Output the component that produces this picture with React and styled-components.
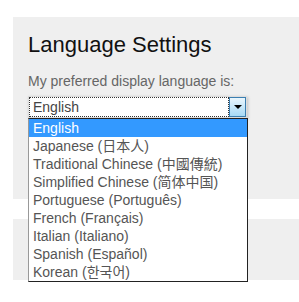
import React, { useState } from 'react'
import styled, { createGlobalStyle } from 'styled-components'

const GlobalStyle = createGlobalStyle`
  html, body {
    margin: 0;
    padding: 0;
    background: #fff;
    font-family: "Liberation Sans", Arial, "Noto Sans CJK SC", sans-serif;
  }
`

const languages = [
  'English',
  'Japanese (日本人)',
  'Traditional Chinese (中國傳統)',
  'Simplified Chinese (简体中国)',
  'Portuguese (Português)',
  'French (Français)',
  'Italian (Italiano)',
  'Spanish (Español)',
  'Korean (한국어)',
]

const Page = styled.div`
  padding: 17px 0 0 13px;
  overflow: hidden;
`

const Panel = styled.section`
  background: #efefef;
  height: ${(p) => p.$height}px;
  padding: ${(p) => (p.$padded ? '15px 15px 0' : '0')};
  margin-bottom: 20px;
  box-sizing: border-box;
`

const Heading = styled.h2`
  margin: 0;
  font-size: 22px;
  font-weight: normal;
  line-height: 25px;
  color: #111;
`

const Label = styled.p`
  margin: 16px 0 7px;
  font-size: 14px;
  line-height: 16px;
  color: #666;
`

const SelectWrap = styled.div`
  position: relative;
  width: 219px;
  z-index: 2;
`

const SelectBox = styled.div`
  display: flex;
  height: 22px;
  box-sizing: border-box;
  background: #fff;
  border: 1px solid #dcdcdc;
  box-shadow: 1px 1px 3px rgba(0, 0, 0, 0.2);
`

const Value = styled.div`
  flex: 1;
  outline: 1px dotted #333;
  outline-offset: -1px;
  padding-left: 4px;
  font-size: 14px;
  line-height: 20px;
  color: #444;
`

const ArrowButton = styled.div`
  width: 17px;
  box-sizing: border-box;
  border: 1px solid #3c7fb1;
  background: linear-gradient(#eaf6fd, #a7d9f5);
  display: flex;
  align-items: center;
  justify-content: center;

  &::after {
    content: '';
    border-left: 4px solid transparent;
    border-right: 4px solid transparent;
    border-top: 4px solid #000;
  }
`

const OptionList = styled.ul`
  position: absolute;
  top: 100%;
  left: 0;
  width: 220px;
  box-sizing: border-box;
  margin: 0;
  padding: 0;
  list-style: none;
  background: #fff;
  border: 1px solid #222;
  border-left-color: #999;
`

const Option = styled.li`
  height: 18px;
  padding-left: 4px;
  font-size: 14px;
  line-height: 18px;
  white-space: nowrap;
  color: ${(p) => (p.$selected ? '#fff' : '#555')};
  background: ${(p) => (p.$selected ? '#3399ff' : 'transparent')};
`

export default function App() {
  const [value] = useState('English')

  return (
    <>
      <GlobalStyle />
      <Page>
        <Panel $height={182} $padded>
          <Heading>Language Settings</Heading>
          <Label>My preferred display language is:</Label>
          <SelectWrap>
            <SelectBox>
              <Value>{value}</Value>
              <ArrowButton />
            </SelectBox>
            <OptionList>
              {languages.map((lang) => (
                <Option key={lang} $selected={lang === value}>
                  {lang}
                </Option>
              ))}
            </OptionList>
          </SelectWrap>
        </Panel>
        <Panel $height={61} />
      </Page>
    </>
  )
}
